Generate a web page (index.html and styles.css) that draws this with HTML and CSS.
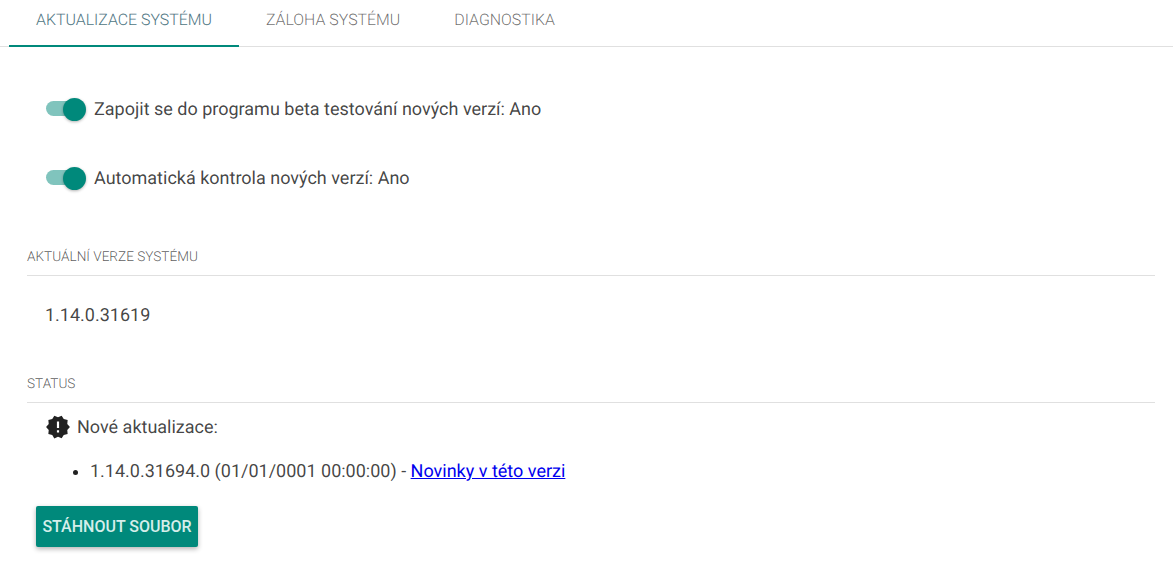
FILE: index.html
```html
<!DOCTYPE html>
<html lang="cs">
<head>
<meta charset="utf-8">
<title>Aktualizace systému</title>
<link rel="stylesheet" href="styles.css">
</head>
<body>
<nav class="tabs">
  <a class="tab tab-active">Aktualizace systému</a>
  <a class="tab">Záloha systému</a>
  <a class="tab">Diagnostika</a>
</nav>
<main class="content">
  <div class="toggles">
    <div class="toggle-row">
      <span class="switch"><span class="track"></span><span class="thumb"></span></span>
      <span class="toggle-label">Zapojit se do programu beta testování nových verzí: Ano</span>
    </div>
    <div class="toggle-row">
      <span class="switch"><span class="track"></span><span class="thumb"></span></span>
      <span class="toggle-label">Automatická kontrola nových verzí: Ano</span>
    </div>
  </div>
  <section class="section section-version">
    <h2 class="section-title">Aktuální verze systému</h2>
    <p class="version">1.14.0.31619</p>
  </section>
  <section class="section section-status">
    <h2 class="section-title">Status</h2>
    <div class="notice">
      <svg class="notice-icon" viewBox="0 0 24 24" width="26" height="26" aria-hidden="true"><path d="M23 12l-2.44-2.79.34-3.69-3.61-.82-1.89-3.2L12 2.96 8.6 1.5 6.71 4.69 3.1 5.5l.34 3.7L1 12l2.44 2.79-.34 3.7 3.61.82L8.6 22.5l3.4-1.47 3.4 1.46 1.89-3.19 3.61-.82-.34-3.69L23 12zm-10 5h-2v-2h2v2zm0-4h-2V7h2v6z"/></svg>
      <span class="notice-text">Nové aktualizace:</span>
    </div>
    <ul class="updates">
      <li>1.14.0.31694.0 (01/01/0001 00:00:00) - <a href="#">Novinky v této verzi</a></li>
    </ul>
    <button class="download" type="button">Stáhnout soubor</button>
  </section>
</main>
</body>
</html>
```
FILE: styles.css
```css
* { box-sizing: border-box; }
html, body { margin: 0; padding: 0; background: #fff; }
body {
  font-family: Roboto, "Liberation Sans", sans-serif;
  font-size: 18px;
  font-weight: 400;
  color: rgba(0, 0, 0, 0.74);
  height: 566px;
  overflow: hidden;
  text-rendering: geometricPrecision;
}
.tabs {
  display: flex;
  height: 47px;
  padding-left: 9px;
  border-bottom: 1px solid #e0e0e0;
}
.tab {
  height: 47px;
  padding: 0 27px;
  line-height: 40px;
  font-size: 15.9px;
  font-weight: 300;
  text-transform: uppercase;
  color: rgba(0, 0, 0, 0.58);
}
.tab-active {
  color: #4f7683;
  border-bottom: 2px solid #00897b;
}
.content { padding: 0 18px 0 27px; }
.toggles {
  display: flex;
  flex-direction: column;
  gap: 45px;
  padding-top: 50px;
  padding-left: 18px;
}
.toggle-row {
  display: flex;
  align-items: center;
  gap: 8px;
  height: 24px;
}
.toggle-label { line-height: 25px; height: 24px; }
.switch {
  position: relative;
  display: block;
  width: 41px;
  height: 24px;
  flex: none;
}
.track {
  position: absolute;
  left: 1px;
  top: 4px;
  width: 34px;
  height: 15px;
  border-radius: 8px;
  background: #80c4bd;
}
.thumb {
  position: absolute;
  left: 18px;
  top: 1px;
  width: 23px;
  height: 23px;
  border-radius: 50%;
  background: #00897b;
  box-shadow: 0 1px 3px rgba(0, 0, 0, 0.3);
}
.section-version { margin-top: 58px; }
.section-status { margin-top: 47px; }
.section-title {
  margin: 0;
  height: 28px;
  border-bottom: 1px solid #e0e0e0;
  font-size: 13.6px;
  font-weight: 300;
  line-height: 19px;
  text-transform: uppercase;
  color: rgba(0, 0, 0, 0.66);
}
.version {
  margin: 0;
  padding: 28px 0 0 18px;
  line-height: 24px;
}
.notice {
  display: flex;
  align-items: center;
  gap: 6px;
  margin-top: 10px;
  padding-left: 18px;
  height: 28px;
}
.notice-text { line-height: 30px; height: 28px; }
.notice-icon { fill: #212121; flex: none; }
.updates {
  margin: 19px 0 0;
  padding: 0 0 0 63px;
  line-height: 24px;
}
.updates li::marker { color: #212121; }
.updates a { color: #0000ee; text-decoration: underline; }
.download {
  display: block;
  width: 162px;
  height: 41px;
  margin: 22px 0 0 9px;
  padding: 0;
  border: 0;
  border-radius: 2px;
  background: #00897b;
  color: #d5eeea;
  font-family: inherit;
  font-size: 16px;
  font-weight: 500;
  text-transform: uppercase;
  box-shadow: 0 2px 5px rgba(0, 0, 0, 0.3);
}
```
